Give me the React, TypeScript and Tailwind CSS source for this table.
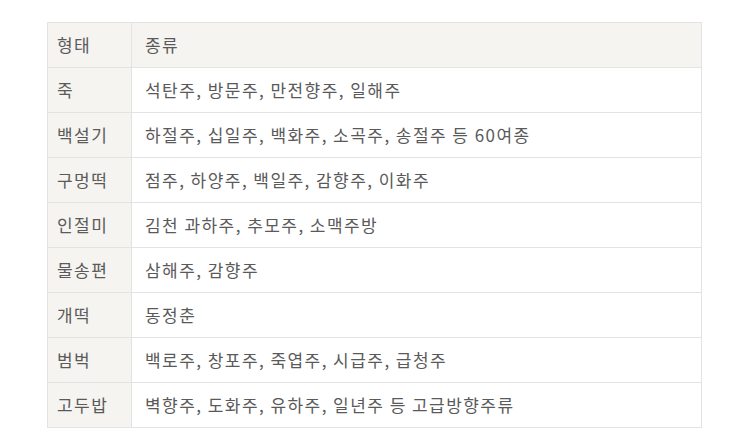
import React from "react";

const rows: [string, string][] = [
  ["죽", "석탄주, 방문주, 만전향주, 일해주"],
  ["백설기", "하절주, 십일주, 백화주, 소곡주, 송절주 등 60여종"],
  ["구멍떡", "점주, 하양주, 백일주, 감향주, 이화주"],
  ["인절미", "김천 과하주, 추모주, 소맥주방"],
  ["물송편", "삼해주, 감향주"],
  ["개떡", "동정춘"],
  ["범벅", "백로주, 창포주, 죽엽주, 시급주, 급청주"],
  ["고두밥", "벽향주, 도화주, 유하주, 일년주 등 고급방향주류"],
];

export default function App() {
  return (
    <div className="w-[750px] h-[439px] bg-white pt-[22px] pl-[47px]" style={{ fontFamily: '"Noto Sans CJK KR", "Noto Sans", sans-serif' }}>
      <table className="w-[655px] border-collapse text-[17px] tracking-[1.45px] text-[#5a5a5a]">
        <tbody>
          <tr className="h-[45px]">
            <td className="w-[84px] border border-[#e3e3e3] bg-[#f5f4f0] pl-[9px] align-middle">형태</td>
            <td className="border border-[#e3e3e3] bg-[#f5f4f0] pl-[13px] align-middle">종류</td>
          </tr>
          {rows.map(([a, b]) => (
            <tr key={a} className="h-[45px]">
              <td className="border border-[#e3e3e3] bg-[#f5f4f0] pl-[9px] align-middle">{a}</td>
              <td className="border border-[#e3e3e3] bg-white pl-[13px] align-middle">{b}</td>
            </tr>
          ))}
        </tbody>
      </table>
    </div>
  );
}
